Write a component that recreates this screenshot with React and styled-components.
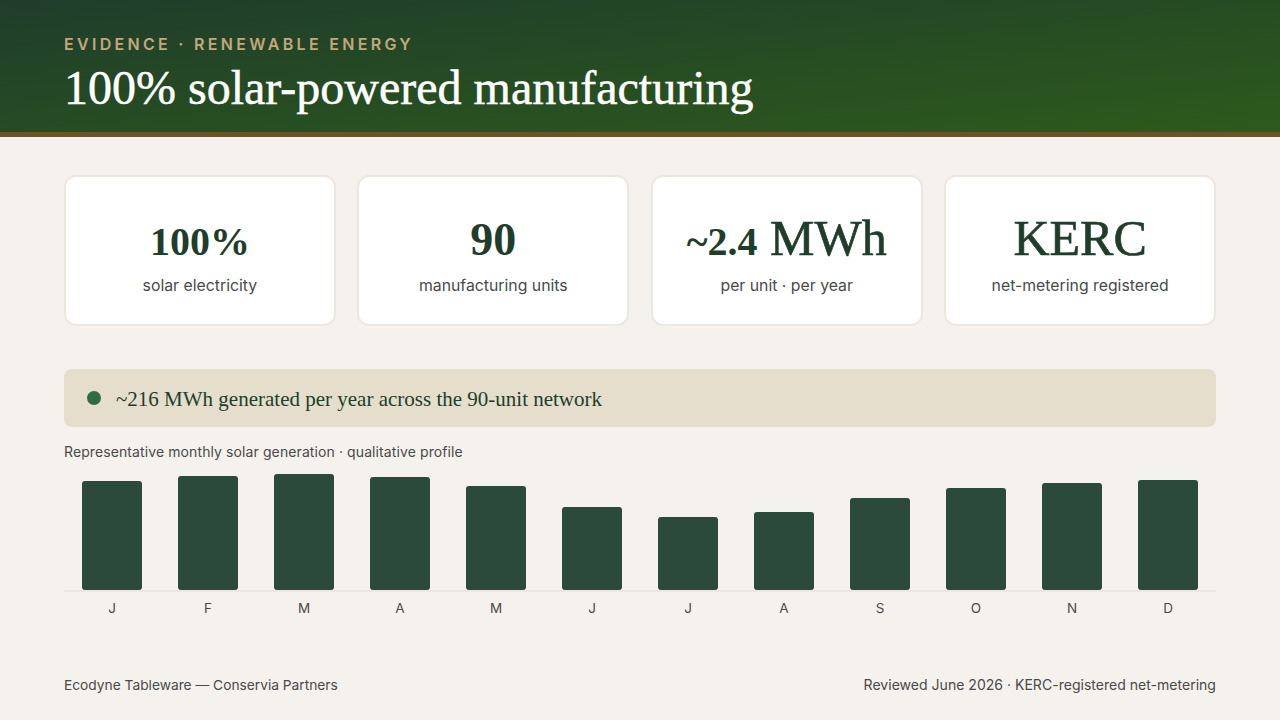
import React from "react";
import styled, { createGlobalStyle } from "styled-components";

const Global = createGlobalStyle`
  html, body { margin: 0; padding: 0; }
  body { background: #f5f2ed; font-family: "Inter", "Lato", sans-serif; }
`;
const serif = `"Liberation Serif", "DejaVu Serif", serif`;
const Page = styled.div`
  width: 1280px; height: 720px; display: flex; flex-direction: column; overflow: hidden; background: #f5f2ed;
`;
const Header = styled.header`
  height: 132px; box-sizing: content-box; border-bottom: 5px solid #6b5228;
  background: linear-gradient(to bottom right, #1f3d2b 0%, #2d5a1b 100%);
  padding: 0 64px; display: flex; flex-direction: column; justify-content: flex-start;
`;
const Eyebrow = styled.div`
  margin-top: 35px; font-size: 16px; line-height: 18px; font-weight: 600; letter-spacing: 3.3px; color: #c4a77d;
`;
const Title = styled.h1`
  margin: 6px 0 0; font-family: ${serif}; font-size: 48px; line-height: 58px; font-weight: 400; color: #fff;
  -webkit-text-stroke: 0.5px #fff;
`;
const Main = styled.main`
  flex: 1; padding: 38px 64px 0; display: flex; flex-direction: column;
`;
const Cards = styled.div`
  display: grid; grid-template-columns: repeat(4, 1fr); gap: 21.6px;
`;
const Card = styled.div`
  height: 151px; box-sizing: border-box; background: #fff; border: 2px solid #ece8df; border-radius: 12px;
  display: flex; flex-direction: column; align-items: center; padding-top: 31px;
`;
const Value = styled.div`
  font-family: ${serif}; font-size: 50px; line-height: 60px; height: 60px; font-weight: 400; color: #1f3d2b; white-space: nowrap;
  -webkit-text-stroke: 0.7px #1f3d2b;
`;
const Figure = styled.span`
  font-size: ${p => p.$size}px; font-weight: 700; -webkit-text-stroke: 0;
`;
const Label = styled.div`
  margin-top: 8px; font-size: 15.8px; line-height: 20px; color: #4a4a4a;
`;
const Callout = styled.div`
  margin-top: 43px; height: 58px; background: #e5decd; border-radius: 8px; display: flex; align-items: center; padding: 0 23px; gap: 15px;
`;
const Dot = styled.span`
  width: 14px; height: 14px; border-radius: 50%; background: #2f6b45; flex: none;
`;
const CalloutText = styled.div`
  font-family: ${serif}; font-size: 21px; line-height: 26px; color: #1f3d2b; padding-top: 2px;
`;
const Caption = styled.div`
  margin-top: 16px; font-size: 14px; letter-spacing: 0.1px; line-height: 18px; color: #4a4a4a;
`;
const Chart = styled.div`
  margin-top: 10px; height: 119px; display: grid; grid-template-columns: repeat(12, 1fr); align-items: end; border-bottom: 2px solid #ece8df;
`;
const BarSlot = styled.div`
  display: flex; justify-content: center; align-items: flex-end; height: 117px;
`;
const Bar = styled.div`
  width: 60px; background: #2c4a3a; border-radius: 3px;
`;
const Months = styled.div`
  margin-top: 8px; display: grid; grid-template-columns: repeat(12, 1fr);
`;
const Month = styled.div`
  text-align: center; font-size: 13.5px; line-height: 16px; color: #4a4a4a;
`;
const Footer = styled.footer`
  margin-top: auto; margin-bottom: 26px; display: flex; justify-content: space-between; line-height: 18px; color: #4a4a4a;
`;
const FooterText = styled.span`
  font-size: ${p => p.$size}px;
`;

const cards = [
  [<Figure $size={40} key="a">100%</Figure>, "solar electricity"],
  [<Figure $size={46} key="b">90</Figure>, "manufacturing units"],
  [<React.Fragment key="c"><Figure $size={40}>~2.4</Figure> MWh</React.Fragment>, "per unit · per year"],
  ["KERC", "net-metering registered"],
];
const bars = [109.5, 114.5, 116.5, 113.5, 104.5, 83.5, 73.5, 78.5, 92.5, 102.5, 107.5, 110.5];
const months = "JFMAMJJASOND".split("");

export default function App() {
  return (
    <Page>
      <Global />
      <Header>
        <Eyebrow>EVIDENCE · RENEWABLE ENERGY</Eyebrow>
        <Title>100% solar-powered manufacturing</Title>
      </Header>
      <Main>
        <Cards>
          {cards.map(([v, l]) => (
            <Card key={l}>
              <Value>{v}</Value>
              <Label>{l}</Label>
            </Card>
          ))}
        </Cards>
        <Callout>
          <Dot />
          <CalloutText>~216 MWh generated per year across the 90-unit network</CalloutText>
        </Callout>
        <Caption>Representative monthly solar generation · qualitative profile</Caption>
        <Chart>
          {bars.map((h, i) => (
            <BarSlot key={i}><Bar style={{ height: h }} /></BarSlot>
          ))}
        </Chart>
        <Months>
          {months.map((m, i) => <Month key={i}>{m}</Month>)}
        </Months>
        <Footer>
          <FooterText $size={13.75}>Ecodyne Tableware — Conservia Partners</FooterText>
          <FooterText $size={14.05}>Reviewed June 2026 · KERC-registered net-metering</FooterText>
        </Footer>
      </Main>
    </Page>
  );
}
